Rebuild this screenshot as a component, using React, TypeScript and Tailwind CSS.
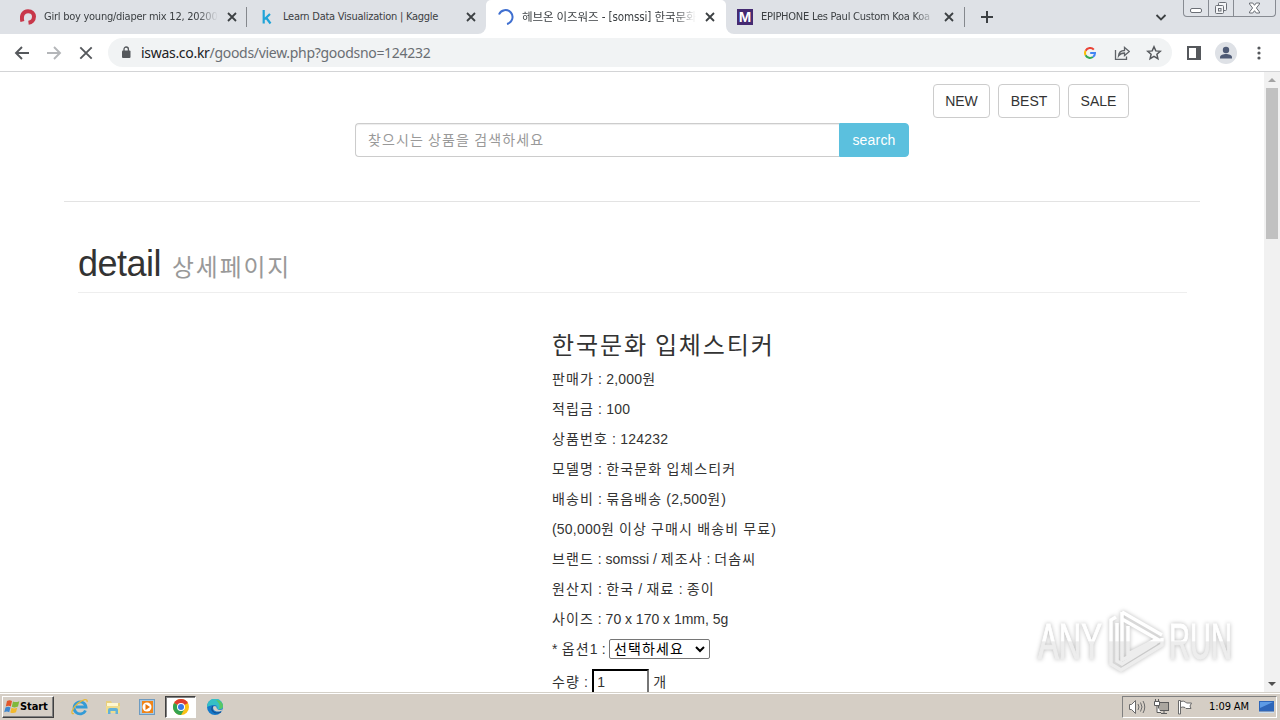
import { Fragment, ReactNode } from 'react';

const rows = [
  { text: '판매가 : 2,000원' },
  { text: '적립금 : 100' },
  { text: '상품번호 : 124232' },
  { text: '모델명 : 한국문화 입체스티커' },
  { text: '배송비 : 묶음배송 (2,500원)' },
  { text: '(50,000원 이상 구매시 배송비 무료)' },
  { text: '브랜드 : somssi / 제조사 : 더솜씨', tight: true },
  { text: '원산지 : 한국 / 재료 : 종이' },
  { text: '사이즈 : 70 x 170 x 1mm, 5g', tight: true },
];

// Hangul gets a full em per syllable, Latin keeps its own spacing
function Ko({ children }: { children: string }) {
  return (
    <>
      {children.split(/([가-힣]+)/).map((part, i) =>
        i % 2 ? <span key={i} className="tracking-[0.08em]">{part}</span> : <Fragment key={i}>{part}</Fragment>
      )}
    </>
  );
}

function CloseIcon() {
  return (
    <svg width="14" height="14" viewBox="0 0 14 14" className="shrink-0" stroke="#3c4043" strokeWidth="1.8">
      <path d="M3 3l8 8M11 3l-8 8" />
    </svg>
  );
}

function Tab({ icon, title, fade, active }: { icon: ReactNode; title: string; fade?: boolean; active?: boolean }) {
  return (
    <div className="flex h-full w-[239px] shrink-0 items-center pl-3 text-[#3c4043]">
      <div className="flex w-4 shrink-0 justify-center">{icon}</div>
      <div
        className={`ml-2 w-[174px] whitespace-nowrap font-['DejaVu_Sans_Condensed','Noto_Sans_CJK_KR',sans-serif] leading-[18px] ${
          active ? 'text-[11.5px] tracking-[-0.1px]' : 'text-[11px] tracking-[-0.25px]'
        } ${fade ? '[mask-image:linear-gradient(to_right,#000_88%,transparent)]' : ''}`}
      >
        {title}
      </div>
      <div className="ml-[7px]"><CloseIcon /></div>
    </div>
  );
}

function TabStrip() {
  return (
    <div className="flex h-[34px] bg-white">
      <div className="flex w-[486px] shrink-0 items-center rounded-br-lg bg-[#dee1e6] pl-2">
        <Tab
          fade
          title="Girl boy young/diaper mix 12, 20200"
          icon={
            <svg width="16" height="16" viewBox="0 0 16 16" fill="none" stroke="#c8374a" strokeWidth="4">
              <path d="M2.400 12.500C.8 6.500 3.400 2.200 8 2.200c4 0 6 2.600 6 5.400 0 3.400-2.500 5.800-5.500 6.200" />
            </svg>
          }
        />
        <div className="-ml-px h-5 w-px bg-[#85888d]" />
        <Tab
          title="Learn Data Visualization | Kaggle"
          icon={
            <svg width="16" height="16" viewBox="0 0 16 16" fill="none" stroke="#20a4d8" strokeWidth="2.2">
              <path d="M4.700 1v13.500M11 5L5.500 10.300M7 8.500l4.500 6" />
            </svg>
          }
        />
      </div>
      <div className="w-[240px] shrink-0 bg-linear-to-b from-[#dee1e6] from-50% to-white to-50%">
        <div className="h-full rounded-t-[5px] bg-white">
          <Tab
            active
            fade
            title="헤브온 이즈워즈 - [somssi] 한국문화"
            icon={
              <svg width="16" height="16" viewBox="0 0 16 16" fill="none" stroke="#3f6fd0" strokeWidth="2">
                <path d="M1 5.500A7 7 0 1 1 9 14.900" />
              </svg>
            }
          />
        </div>
      </div>
      <div className="flex flex-1 items-center rounded-bl-lg bg-[#dee1e6]">
        <div className="-ml-px"><Tab
          fade
          title="EPIPHONE Les Paul Custom Koa Koa"
          icon={
            <div className="h-4 w-4 bg-[#452a72] text-center font-['Liberation_Sans',sans-serif] text-[15px] leading-4 font-bold text-white">M</div>
          }
        /></div>
        <div className="h-5 w-px bg-[#85888d]" />
        <svg width="14" height="14" viewBox="0 0 14 14" className="ml-[15px]" stroke="#3c4043" strokeWidth="2">
          <path d="M7 1v12M1 7h12" />
        </svg>
        <svg width="12" height="12" viewBox="0 0 12 12" className="ml-[161px]" fill="none" stroke="#3c4043" strokeWidth="1.8">
          <path d="M1.500 4L6 8.500 10.500 4" />
        </svg>
        <WindowButtons />
      </div>
    </div>
  );
}

function WindowButtons() {
  return (
    <div className="ml-4 flex h-[17px] w-[93px] self-start rounded-b-[4px] border border-t-0 border-[#878b92] bg-[#e0e3e8]">
      <div className="flex w-[25px] items-center justify-center border-r border-[#878b92] pt-1">
        <div className="h-[5px] w-3 rounded-[2px] border border-[#6b6f76] bg-white" />
      </div>
      <div className="flex w-[25px] items-center justify-center border-r border-[#878b92]">
        <svg width="14" height="14" viewBox="0 0 14 14" fill="#f4f5f7" stroke="#6b6f76">
          <rect x="4.500" y="1.500" width="8" height="8" rx="1" />
          <rect x="1.500" y="4.500" width="8" height="8" rx="1" />
          <rect x="4.500" y="7.500" width="2.500" height="2.500" />
        </svg>
      </div>
      <div className="flex flex-1 items-center justify-center">
        <svg width="13" height="12" viewBox="0 0 13 12" fill="#fff" stroke="#6b6f76">
          <path d="M1.500 1h3.300l1.700 2.300L8.200 1h3.300v1L8.400 6l3.100 4v1H8.200L6.500 8.700 4.800 11H1.500v-1l3.100-4-3.100-4z" />
        </svg>
      </div>
    </div>
  );
}

function Toolbar() {
  return (
    <div className="flex h-[38px] items-center border-b border-[#d3d4d6] bg-white pl-[14px]">
      <svg width="16" height="16" viewBox="0 0 16 16" fill="none" stroke="#55585c" strokeWidth="1.9">
        <path d="M15 8H2M8 2L2 8l6 6" />
      </svg>
      <svg width="16" height="16" viewBox="0 0 16 16" className="ml-4" fill="none" stroke="#b4b6b9" strokeWidth="1.9">
        <path d="M1 8h13M8 2l6 6-6 6" />
      </svg>
      <svg width="16" height="16" viewBox="0 0 16 16" className="ml-4" fill="none" stroke="#55585c" strokeWidth="1.9">
        <path d="M2.300 2.300l11.400 11.400M13.700 2.300L2.300 13.700" />
      </svg>
      <div className="ml-[14px] flex h-[29px] w-[1064px] items-center rounded-full bg-[#f1f3f4] pr-[10px] pl-[13px]">
        <svg width="10" height="13" viewBox="0 0 10 13" fill="#55585c">
          <rect x="1" y="4.500" width="8.500" height="7.500" rx="1" />
          <path d="M3 5V3.200a2.200 2.200 0 0 1 4.400 0V5" fill="none" stroke="#55585c" strokeWidth="1.3" />
        </svg>
        <div className="ml-[10px] flex-1 font-['Noto_Sans',sans-serif] text-[14px] leading-5 tracking-[-0.3px] whitespace-nowrap text-[#6a6e73]">
          <span className="text-[#202124]">iswas.co.kr</span>/goods/view.php?goodsno=124232
        </div>
        <svg width="12" height="12" viewBox="0 0 12 12" fill="none" strokeWidth="2">
          <path d="M9.800 2.700A5 5 0 0 0 1.600 3.700" stroke="#ea4335" />
          <path d="M1.600 3.700a5 5 0 0 0 0 4.600" stroke="#fbbc05" />
          <path d="M1.600 8.300a5 5 0 0 0 7.300 1.700" stroke="#34a853" />
          <path d="M8.900 10A4.700 4.700 0 0 0 11 6H6.200" stroke="#4285f4" />
        </svg>
        <svg width="16" height="16" viewBox="0 0 16 16" className="ml-[18px]" fill="none" stroke="#5f6368" strokeWidth="1.3">
          <path d="M1.500 5v9.300h11V11.500" />
          <path d="M4.500 11c.3-3.500 2.500-5.500 6-5.500V2.500L15.300 6.500l-4.800 4V8c-2.700 0-4.500.8-6 3z" />
        </svg>
        <svg width="16" height="16" viewBox="0 0 16 16" className="ml-4" fill="none" stroke="#55585c" strokeWidth="1.5">
          <path d="M8 1.800l1.800 4.100 4.500.4-3.400 3 1 4.400L8 11.400l-3.900 2.300 1-4.400-3.400-3 4.500-.4z" />
        </svg>
      </div>
      <svg width="14" height="14" viewBox="0 0 14 14" className="ml-[15px]">
        <path d="M1 1h12v12H1z" fill="none" stroke="#55585c" strokeWidth="2" />
        <path d="M9 1h4v12H9z" fill="#55585c" />
      </svg>
      <svg width="22" height="22" viewBox="0 0 22 22" className="ml-[14px]">
        <circle cx="11" cy="11" r="11" fill="#dee1e6" />
        <circle cx="11" cy="8" r="3.200" fill="#4e5a75" />
        <path d="M5 16.500v-1.300c0-2 3.500-3.200 6-3.200s6 1.200 6 3.200v1.300z" fill="#4e5a75" />
      </svg>
      <svg width="4" height="16" viewBox="0 0 4 16" className="ml-[20px]" fill="#55585c">
        <circle cx="2" cy="3" r="1.600" />
        <circle cx="2" cy="8" r="1.600" />
        <circle cx="2" cy="13" r="1.600" />
      </svg>
    </div>
  );
}

function Page() {
  return (
    <div className="flex-1 font-['Liberation_Sans','Noto_Sans_CJK_KR',sans-serif] text-[14px] leading-5 tracking-[0.2px] text-[#333]">
      <div className="flex justify-end gap-2 pt-3 pr-[135px] tracking-normal">
        <button className="h-[34px] w-[57px] rounded border border-[#ccc]">NEW</button>
        <button className="h-[34px] w-[62px] rounded border border-[#ccc]">BEST</button>
        <button className="h-[34px] w-[61px] rounded border border-[#ccc]">SALE</button>
      </div>
      <div className="mt-[5px] ml-[355px] flex h-[34px] w-[554px]">
        <div className="flex-1 rounded-l border border-r-0 border-[#ccc] px-3 leading-[32px] text-[#999] shadow-[inset_0_1px_1px_rgba(0,0,0,.075)]">
          <Ko>찾으시는 상품을 검색하세요</Ko>
        </div>
        <button className="w-[70px] rounded-r border border-[#5bc0de] bg-[#5bc0de] text-white">search</button>
      </div>
      <div className="mt-11 ml-16 h-px w-[1136px] bg-[#e3e3e3]" />
      <div className="ml-[78px] flex h-[91px] w-[1109px] items-baseline border-b border-[#eee] pt-[42px] tracking-normal">
        <span className="text-[36px] leading-10 tracking-[-0.5px]">detail</span>
        <span className="ml-[11px] text-[23.8px] leading-10 text-[#999]"><Ko>상세페이지</Ko></span>
      </div>
      <div className="ml-[552px]">
        <div className="mt-[39px] h-8 pt-px text-[24px] leading-[26px]"><Ko>한국문화 입체스티커</Ko></div>
        {rows.map(row => (
          <div key={row.text} className={`h-[30px] leading-[30px] ${row.tight ? 'tracking-[-0.02px]' : ''}`}>
            <Ko>{row.text}</Ko>
          </div>
        ))}
        <div className="flex h-[30px] items-center">
          <span><Ko>* 옵션1 :</Ko></span>
          <div className="ml-[3px] flex h-5 w-[101px] items-center justify-between rounded-[2px] border border-[#767676] pr-1 pl-1 leading-[18px] text-black">
            <span><Ko>선택하세요</Ko></span>
            <svg width="10" height="8" viewBox="0 0 10 8" fill="none" stroke="#000" strokeWidth="2">
              <path d="M1 2l4 4 4-4" />
            </svg>
          </div>
        </div>
        <div className="flex h-9 items-center">
          <span><Ko>수량 :</Ko></span>
          <div className="ml-1 h-[26px] w-[57px] border-2 border-[#767676] border-t-black border-l-black pl-[3px] leading-[23px]">1</div>
          <span className="ml-1"><Ko>개</Ko></span>
        </div>
      </div>
    </div>
  );
}

function ScrollBar() {
  return (
    <div className="flex w-4 flex-col items-center bg-[#f1f1f1]">
      <div className="flex h-4 items-center">
        <div className="border-x-4 border-b-4 border-x-transparent border-b-[#a3a3a3]" />
      </div>
      <div className="h-[151px] w-3 bg-[#c1c1c1]" />
      <div className="mt-auto flex h-[17px] items-center">
        <div className="border-x-4 border-t-4 border-x-transparent border-t-[#505050]" />
      </div>
    </div>
  );
}

function Watermark() {
  return (
    <svg width="210" height="76" viewBox="0 0 210 76" className="absolute top-[603px] left-[1030px] [filter:drop-shadow(0_0_2px_rgba(0,0,0,.28))]">
      <defs>
        <linearGradient id="wm" x1="0" y1="0" x2="0" y2="76" gradientUnits="userSpaceOnUse">
          <stop offset="0.500" stopColor="#fff" />
          <stop offset="0.510" stopColor="#ededed" />
        </linearGradient>
      </defs>
      <g fill="url(#wm)" stroke="url(#wm)" fontFamily="Liberation Sans, sans-serif" fontSize="50">
        <text x="8" y="56" textLength="64" lengthAdjust="spacingAndGlyphs">ANY</text>
        <text x="139" y="56" textLength="63" lengthAdjust="spacingAndGlyphs">RUN</text>
      </g>
      <g fill="none" stroke="url(#wm)" strokeWidth="3.5">
        <path d="M92 9v48l39-20M92 9l40 23M92 16L127 36 98 51V23" />
        <path d="M86 14l-5 3v44l10 6 41-25v-7M87 20v38l5 3 34-21" />
      </g>
    </svg>
  );
}

function TaskBar() {
  return (
    <div className="flex h-7 items-center border-t border-[#d4d0c8] bg-[#d5cec5] shadow-[inset_0_1px_0_#fff]">
      <div className="mt-px ml-[2px] flex h-[22px] w-[52px] items-center border border-t-white border-r-[#404040] border-b-[#404040] border-l-white pl-px font-['DejaVu_Sans_Condensed',sans-serif] text-[11px] font-bold tracking-[-0.1px] text-black shadow-[inset_-1px_-1px_0_#808080]">
        <svg width="16" height="16" viewBox="0 0 16 16" className="shrink-0">
          <path d="M3 2c2-1.300 3.500-1 5 0L6.800 7.500C5.300 6.500 3.600 6.500 1.800 7.500z" fill="#e2572b" />
          <path d="M9 2.400c2 1 3.800.8 6.300-.2L14 7.600c-2 1-4.200 1-6.200.2z" fill="#7fb93c" />
          <path d="M1.500 8.500c1.800-1 3.500-1 5 0l-1.300 4.700c-1.600-1-3-1-5 0z" fill="#3f87cf" />
          <path d="M7.500 8.800c2 .9 3.800.8 5.700-.1L12 13.300c-2 1-3.800 1-5.700.1z" fill="#f2b92d" />
        </svg>
        <span className="mt-px">Start</span>
      </div>
      <svg width="18" height="18" viewBox="0 0 18 18" className="mt-px ml-[17px]" fill="none">
        <path d="M14.500 12.500A6 6 0 1 1 15 9H5" stroke="#349bd6" strokeWidth="2.8" />
        <path d="M3 15.500C-1 17 1 10 7 5.300 12 1.500 17 0 16 4" stroke="#e6b93b" strokeWidth="1.3" />
      </svg>
      <svg width="16" height="16" viewBox="0 0 16 16" className="mt-px ml-4">
        <path d="M1 2h5l1 2h8v10H1z" fill="#e8cf7c" />
        <path d="M2 4h11v3H2z" fill="#fff7d0" />
        <path d="M1 7h14v7H1z" fill="#efdc8e" />
        <path d="M3 15v-4q0-2 2-2h6q2 0 2 2v4h-2.500v-3h-5v3z" fill="#62b1d8" />
      </svg>
      <svg width="16" height="16" viewBox="0 0 16 16" className="mt-px ml-[18px]">
        <rect x="0.500" y="0.500" width="15" height="15" fill="#a8c9e3" stroke="#6d9bc1" />
        <rect x="3" y="2" width="11" height="12" fill="#f08519" />
        <circle cx="8" cy="8" r="4.500" fill="#fff" />
        <path d="M6.500 5l4.500 3-4.500 3z" fill="#e8750c" />
      </svg>
      <div className="mt-px ml-[10px] flex h-[22px] w-[31px] items-center justify-center border border-t-[#404040] border-r-white border-b-white border-l-[#404040] bg-white shadow-[inset_1px_1px_0_#808080]">
        <svg width="16" height="16" viewBox="0 0 16 16">
          <circle cx="8" cy="8" r="8" fill="#fbc116" />
          <path d="M8 8L1.070 4A8 8 0 0 1 14.930 4z" fill="#df3d31" />
          <path d="M8 8L1.070 4A8 8 0 0 0 8 16l3.500-6z" fill="#34a350" />
          <circle cx="8" cy="8" r="4" fill="#fff" />
          <circle cx="8" cy="8" r="3" fill="#3878e8" />
        </svg>
      </div>
      <svg width="16" height="16" viewBox="0 0 16 16" className="mt-px ml-[11px]">
        <circle cx="8" cy="8" r="8" fill="#1579c9" />
        <path d="M0 8A8 8 0 0 1 16 7c0 3-3 4-6 3 1-2 0-4-3-4-3 0-5 1-7 2z" fill="#35bfc5" />
        <path d="M9 1c4 0 7 3 7 6 0 2-2 3.500-4 3 2-4-1-7-3-9z" fill="#58c765" />
        <path d="M6.500 7c-1.500 3 1 7 8 5l1.500-2c-3 1.800-7 1-6.500-2.500z" fill="#d5cec5" />
        <path d="M6 7c-3 4 1 9 8 6" fill="none" stroke="#154f91" strokeWidth="1.2" />
      </svg>
      <div className="mt-px mr-[3px] ml-auto flex h-[22px] w-[155px] items-center border border-t-[#808080] border-r-white border-b-white border-l-[#808080] pl-[5px]">
        <svg width="18" height="16" viewBox="0 0 18 16" fill="#fff" stroke="#6a6a6a">
          <path d="M1.500 5.500h2l4-4v13l-4-4h-2z" />
          <path d="M10 5q2 3 0 6M12.500 3.500q3 4.500 0 9M15 2q3.500 6 0 12" fill="none" />
        </svg>
        <svg width="16" height="16" viewBox="0 0 16 16" className="ml-[7px]" fill="#fff" stroke="#5b5b5b">
          <rect x="5.500" y="3.500" width="10" height="8" fill="#aaa69f" />
          <path d="M8 14.500h6M11 12v2" />
          <path d="M1.500 2.500h5v4h-5zM2.500 0v2M5.500 0v2M4 7v6.500h4" />
        </svg>
        <svg width="16" height="16" viewBox="0 0 16 16" className="ml-2" fill="#fff" stroke="#6a6a6a">
          <path d="M1.500 15V1.500h2V15zM3.500 2.500q3-1 5 .5l1 1h5L13 7l1 2.500H9l-1-1q-2-1-4.500 0z" />
        </svg>
        <span className="mt-px ml-4 font-['DejaVu_Sans_Condensed',sans-serif] text-[11px] tracking-[-0.1px] whitespace-nowrap text-black">1:09 AM</span>
        <svg width="15" height="14" viewBox="0 0 15 14" className="mr-[2px] ml-auto">
          <path d="M0 1h15v10.500H0z" fill="#2e66b9" />
          <path d="M1 2h13L1 8z" fill="#5d9be5" />
          <path d="M0 12h15v1H0z" fill="#c9dcee" />
        </svg>
      </div>
    </div>
  );
}

export default function App() {
  return (
    <div className="relative flex h-[720px] w-[1280px] flex-col overflow-hidden bg-white">
      <TabStrip />
      <Toolbar />
      <div className="flex h-[620px] shrink-0 overflow-hidden">
        <Page />
        <ScrollBar />
      </div>
      <TaskBar />
      <Watermark />
    </div>
  );
}
